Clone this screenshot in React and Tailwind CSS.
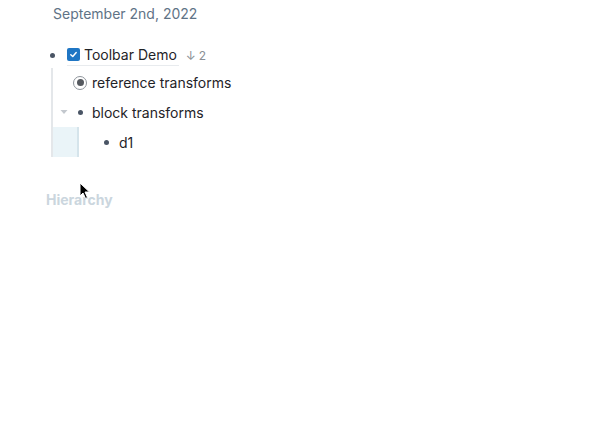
import React from "react";

const Bullet = () => (
  <span className="flex w-[14px] h-[14px] items-center justify-center">
    <span className="block w-[5px] h-[5px] rounded-full bg-[#4a5565]" />
  </span>
);

export default function App() {
  return (
    <div
      className="w-[606px] h-[440px] bg-white relative overflow-hidden"
      style={{ fontFamily: "Inter, 'Noto Sans', sans-serif" }}
    >
      <div className="pl-[53px] pt-[4px] text-[14px] leading-[20px] text-[#5f7386]">
        September 2nd, 2022
      </div>

      <div className="mt-[20px] pl-[45px]">
        {/* Top block */}
        <div className="flex items-center h-[22px]">
          <Bullet />
          <div className="ml-[8px] flex items-center border-b border-[#e8ebee] h-[22px] pr-[2px]">
            <span className="flex w-[13px] h-[13px] rounded-[2px] bg-[#1f76c4] items-center justify-center">
              <svg width="9" height="9" viewBox="0 0 10 10" fill="none">
                <path d="M2 5.2 L4.2 7.3 L8 2.8" stroke="white" strokeWidth="1.6" strokeLinecap="round" strokeLinejoin="round" />
              </svg>
            </span>
            <span className="ml-[4px] text-[14px] text-[#1f2328]">Toolbar Demo</span>
          </div>
          <span className="ml-[7px] mt-[1px] text-[12px] text-[#8a8f95] flex items-center gap-[3px]">
            <span>↓</span>
            <span>2</span>
          </span>
        </div>

        {/* Children */}
        <div className="mt-[2px] ml-[6px] border-l-2 border-[#e4e7ea]">
          <div className="flex items-center h-[29px] pl-[20px]">
            <span className="flex w-[14px] h-[14px] items-center justify-center rounded-full border-[1.5px] border-[#8e949b]">
              <span className="block w-[7px] h-[7px] rounded-full bg-[#55595f]" />
            </span>
            <span className="ml-[5px] text-[14px] text-[#1f2328]">reference transforms</span>
          </div>
          <div className="flex items-center h-[30px] pl-[6px]">
            <svg width="10" height="10" viewBox="0 0 10 10">
              <path d="M1.5 3 L8.5 3 L5 7 Z" fill="#c3c8ce" />
            </svg>
            <span className="ml-[4px]">
              <Bullet />
            </span>
            <span className="ml-[5px] text-[14px] text-[#1f2328]">block transforms</span>
          </div>
          <div className="flex h-[30px]">
            <div className="w-[26px] bg-[#eaf4f8] border-r-2 border-[#d5e4eb]" />
            <div className="flex items-center pl-[20px]">
              <Bullet />
              <span className="ml-[6px] text-[14px] text-[#1f2328]">d1</span>
            </div>
          </div>
        </div>

        <div className="mt-[32px] ml-[1px] text-[14px] font-bold text-[#cbd6de]">Hierarchy</div>
      </div>

      {/* mouse cursor */}
      <svg className="absolute left-[79px] top-[182px]" width="12" height="18" viewBox="0 0 12 18">
        <path d="M1 1 L1 14 L4 11 L6.5 16.5 L8.5 15.5 L6 10 L10.5 10 Z" fill="black" stroke="white" strokeWidth="1" />
      </svg>
    </div>
  );
}
